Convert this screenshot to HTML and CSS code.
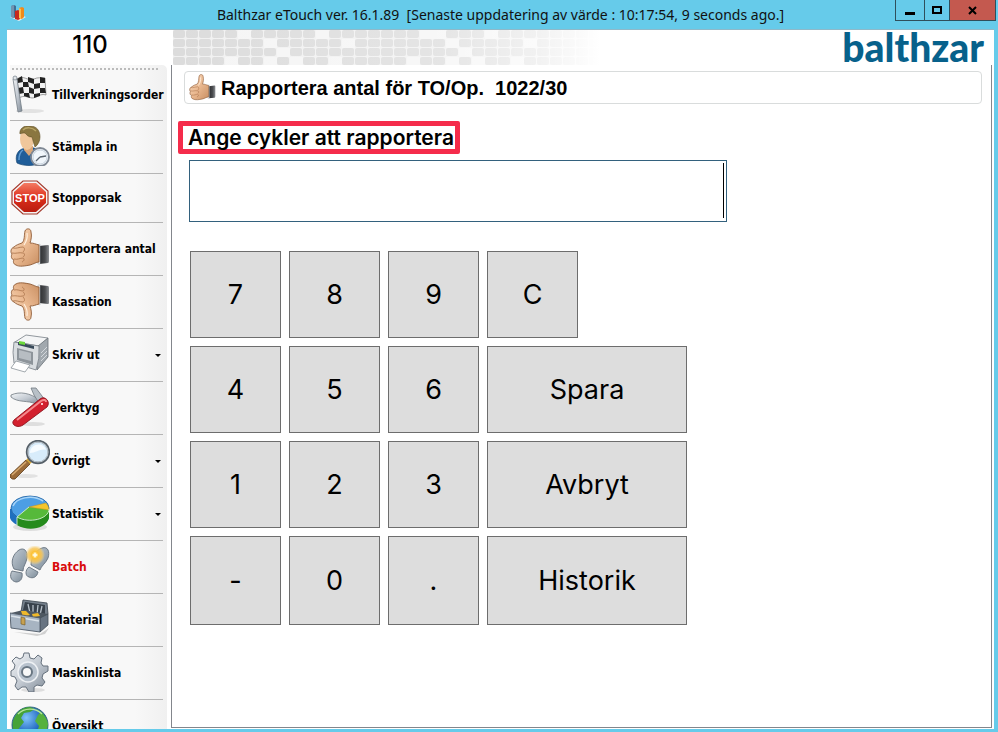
FILE: index.html
```
<!DOCTYPE html>
<html lang="sv">
<head>
    <meta charset="UTF-8" />
    <meta name="viewport" content="width=device-width, initial-scale=1" />
    <title>Balthzar eTouch</title>
    <link rel="stylesheet" href="styles.css">
</head>
<body>
<!-- Delade symboler -->
<svg class="defs" aria-hidden="true">
    <defs>
        <linearGradient id="skin" x1="0" y1="0" x2="1" y2="1">
            <stop offset="0" stop-color="#fbe0c6"/>
            <stop offset="0.5" stop-color="#eab991"/>
            <stop offset="1" stop-color="#c98f62"/>
        </linearGradient>
        <linearGradient id="cuff">
            <stop offset="0" stop-color="#2b2c2e"/>
            <stop offset="0.6" stop-color="#4b4d50"/>
            <stop offset="1" stop-color="#8c8f93"/>
        </linearGradient>
        <linearGradient id="metal" x1="0" y1="0" x2="1" y2="1">
            <stop offset="0" stop-color="#f4f6f8"/>
            <stop offset="0.5" stop-color="#c3cad2"/>
            <stop offset="1" stop-color="#7f8a96"/>
        </linearGradient>
        <linearGradient id="red" x1="0" y1="0" x2="0" y2="1">
            <stop offset="0" stop-color="#f47b63"/>
            <stop offset="0.5" stop-color="#dc2f1c"/>
            <stop offset="1" stop-color="#b91d10"/>
        </linearGradient>
        <linearGradient id="sole" x1="0" y1="0" x2="1" y2="1">
            <stop offset="0" stop-color="#c2cbd3"/>
            <stop offset="1" stop-color="#7e8d9a"/>
        </linearGradient>
        <radialGradient id="glow">
            <stop offset="0" stop-color="#fff6c8"/>
            <stop offset="0.35" stop-color="#fdc236"/>
            <stop offset="0.7" stop-color="#f7c65a" stop-opacity="0.8"/>
            <stop offset="1" stop-color="#f7d98a" stop-opacity="0"/>
        </radialGradient>
        <radialGradient id="sea" cx="0.4" cy="0.3">
            <stop offset="0" stop-color="#7fc4fa"/>
            <stop offset="1" stop-color="#0f56b4"/>
        </radialGradient>
    </defs>
    <symbol id="thumb" viewBox="0 0 40 40">
        <path d="M29 18l9-1q1 0 1 1v15q0 2-1 2l-9 1z" fill="url(#cuff)"/>
        <path d="M28 17l2-1v20l-2 0z" fill="#f1f3f6" stroke="#a7adb5" stroke-width="0.5"/>
        <path d="M12 15c3-3 2-8 3-12 1-3 6-3 6 1 1 4 0 8-1 11 4 0 5 1 9 2v17c-3 0-5 2-9 3-5 1-11 2-14 0-3-1-3-4-2-5-3-1-3-4-2-6-2-2-1-6 2-7 2-2 5-3 8-4z" fill="url(#skin)" stroke="#8e5b37" stroke-width="0.9"/>
        <path d="M2 25c4 1 7-1 11 0 2 0 2 3 0 4m-9 2c4 1 6-1 9-1 2 1 1 3-1 4M3 20c3 1 6-1 10-1 2 1 2 3 0 5" fill="none" stroke="#a9724a" stroke-width="0.8"/>
        <path d="M17 5c1 5-1 9-3 12" fill="none" stroke="#fff0df" stroke-width="1.2"/>
    </symbol>
</svg>

<div class="window">
    <header class="titlebar">
        <svg class="app-icon" viewBox="0 0 18 18" aria-hidden="true">
            <path d="M1 13l9 4 7-4-6-2z" fill="#e9eef0"/>
            <path d="M2 2l3-1 2 1v11l-2 1-3-1z" fill="#3f6d94"/>
            <path d="M2 2l3-1v13l-3-1z" fill="#7194b0"/>
            <path d="M6 7l3-1 2 1v8l-2 1-3-1z" fill="#c8281c"/>
            <path d="M10 4l3-1 2 1v9l-2 2-3-1z" fill="#f08a1b"/>
            <path d="M10 4l2 1v10l-2-1z" fill="#fbc150"/>
        </svg>
        <div class="caption">Balthzar eTouch ver. 16.1.89  [Senaste uppdatering av värde : 10:17:54, 9 seconds ago.]</div>
        <div class="window-buttons">
            <button type="button" class="win-btn minimize" aria-label="Minimera">
                <svg viewBox="0 0 10 10"><path d="M0 7h10v3H0z"/></svg>
            </button>
            <button type="button" class="win-btn maximize" aria-label="Maximera">
                <svg viewBox="0 0 10 10"><path d="M1 2h8v6H1z" fill="none" stroke="#000" stroke-width="2"/></svg>
            </button>
            <button type="button" class="win-btn close" aria-label="Stäng">
                <svg viewBox="0 0 10 10"><path d="M1 2l7 7M8 2l-7 7" stroke="#000" stroke-width="2"/></svg>
            </button>
        </div>
    </header>

    <div class="client">
        <div class="topbar">
            <div class="station">110</div>
            <svg class="pattern" viewBox="0 0 440 35" aria-hidden="true">
                <defs>
                    <pattern id="cells" width="13" height="9" patternUnits="userSpaceOnUse">
                        <rect width="13" height="9" fill="#f1f1f1"/>
                        <rect width="12" height="8" rx="2" fill="#dcdcdc"/>
                    </pattern>
                    <linearGradient id="fade">
                        <stop offset="0" stop-color="#fff" stop-opacity="0"/>
                        <stop offset="0.6" stop-color="#fff" stop-opacity="0.25"/>
                        <stop offset="0.82" stop-color="#fff" stop-opacity="0.6"/>
                        <stop offset="0.97" stop-color="#fff"/>
                    </linearGradient>
                </defs>
                <rect width="440" height="35" fill="url(#cells)"/>
                <path fill="#f5f5f5" d="M65 0h13v9H65zM143 0h13v9h-13zM247 0h26v9h-26zM312 0h13v9h-13zM91 9h13v9H91zM169 9h13v9h-13zM273 9h13v9h-13zM351 9h13v9h-13zM104 18h13v9h-13zM286 18h13v9h-13zM52 27h13v9H52zM91 27h13v9H91zM117 27h13v9h-13zM156 27h13v9h-13zM234 27h13v9h-13zM273 27h13v9h-13zM299 27h13v9h-13zM338 27h13v9h-13z"/>
                <rect width="440" height="35" fill="url(#fade)"/>
            </svg>
            <div class="logo">balthzar</div>
        </div>

        <div class="workspace">
            <nav class="sidebar">
                <button type="button" class="menu-item first">
                    <svg class="icon" viewBox="0 0 40 40" aria-hidden="true">
                        <ellipse cx="20" cy="37" rx="14" ry="2" fill="#e2e2e2"/>
                        <path d="M7 5c6-5 11 3 17 0 4-2 7-1 11-1l1 17c-6-2-9 3-14 3-5-1-8-3-13 0z" fill="#f1f1f1" stroke="#777" stroke-width="0.7"/>
                        <path d="M7 5l5-3 1 6-5 1zM18 3l6 2v5l-6-2zM30 3l5 1v5l-5 0zM13 8l5 0 1 5-6 0zM24 10l6-1v5l-6 1zM8 14l5-1 1 6-5 1zM19 13l5 2v5l-5-1zM30 14l5 0 1 5-6 0zM14 19l5 0 1 5-6-2zM24 20l6-1v3l-6 2z" fill="#222"/>
                        <path d="M3 5q2-3 4 0l5 32-4 1z" fill="url(#metal)" stroke="#737d86" stroke-width="0.8"/>
                        <circle cx="5" cy="4" r="2" fill="#dfe4e8" stroke="#737d86" stroke-width="0.7"/>
                    </svg>
                    <span>Tillverkningsorder</span>
                </button>
                <button type="button" class="menu-item">
                    <svg class="icon" viewBox="0 0 40 40" aria-hidden="true">
                        <path d="M7 37c-2-6 0-12 5-14l8-2c6 1 10 4 11 8v7c-6 5-18 4-24 1z" fill="#1f5d99" stroke="#174672" stroke-width="0.7"/>
                        <path d="M9 34c0-5 1-8 4-10" fill="none" stroke="#5e9bd2" stroke-width="1.5"/>
                        <path d="M14 20h9v5l-4 5-5-6z" fill="#d9a77a"/>
                        <ellipse cx="17" cy="13" rx="7" ry="11" fill="#f0c79b"/>
                        <path d="M10 8C9 3 14-1 20 0c7 0 10 5 10 11 0 4-2 8-5 10-1-3-2-6-3-10-4 0-5-2-7-4-2 0-4 0-5 1z" fill="#8a7640" stroke="#5f5126" stroke-width="0.6"/>
                        <path d="M13 4c3-3 9-3 13 1" fill="none" stroke="#b8a566" stroke-width="1.5"/>
                        <circle cx="30" cy="31" r="9" fill="#f1f6fb" stroke="#7f8894" stroke-width="1.8"/>
                        <circle cx="30" cy="31" r="7" fill="none" stroke="#bdc9d6" stroke-width="0.8"/>
                        <path d="M30 31l6-1M30 31l-4 4" stroke="#59636e" stroke-width="1.3"/>
                    </svg>
                    <span>Stämpla in</span>
                </button>
                <button type="button" class="menu-item short">
                    <svg class="icon" viewBox="0 0 40 40" aria-hidden="true">
                        <path d="M13 4h14l11 10v13L27 37H13L2 27V14z" fill="#f4f4f4" stroke="#a43a2d" stroke-width="1.2"/>
                        <path d="M14 6h12l10 9v11l-10 9H14L4 26V15z" fill="url(#red)"/>
                        <text x="20" y="25" class="stop-text">STOP</text>
                    </svg>
                    <span>Stopporsak</span>
                </button>
                <button type="button" class="menu-item">
                    <svg class="icon" aria-hidden="true"><use href="#thumb"/></svg>
                    <span>Rapportera antal</span>
                </button>
                <button type="button" class="menu-item">
                    <svg class="icon flipped" aria-hidden="true"><use href="#thumb"/></svg>
                    <span>Kassation</span>
                </button>
                <button type="button" class="menu-item has-menu">
                    <svg class="icon" viewBox="0 0 40 40" aria-hidden="true">
                        <path d="M5 8L16 1l22 3-9 8z" fill="#f4f5f6" stroke="#777f86" stroke-width="0.8"/>
                        <path d="M28 12l10-8v19L27 36z" fill="#a1a8ae" stroke="#6b7278" stroke-width="0.8"/>
                        <path d="M31 19l6-6M31 23l6-6M31 27l6-6" stroke="#d4d8dc" stroke-width="1"/>
                        <path d="M4 8q-2 10 0 21l22 7q4-11 3-24z" fill="#d9dde0" stroke="#777f86" stroke-width="0.8"/>
                        <path d="M8 8l16 4 0 3-16-4z" fill="#394a5a"/>
                        <path d="M9 7l6 1v3l-6-1z" fill="#6bd83b"/>
                        <path d="M7 14l16 4v13L7 26z" fill="#8d949a"/>
                        <path d="M9 16l12 3v8L9 24z" fill="#b7bdc2"/>
                        <path d="M6 27l14 4-5 7-14-4z" fill="#fff" stroke="#8c949a" stroke-width="0.8"/>
                    </svg>
                    <span>Skriv ut</span>
                </button>
                <button type="button" class="menu-item">
                    <svg class="icon" viewBox="0 0 40 40" aria-hidden="true">
                        <ellipse cx="23" cy="37" rx="12" ry="2" fill="#dedede"/>
                        <path d="M1 8c9-4 19-2 29 5l-4 4C18 13 8 16 1 10z" fill="url(#metal)" stroke="#717a82" stroke-width="0.8"/>
                        <path d="M21 1l5 0 9 12-6 3-5-8z" fill="#b8c0c7" stroke="#717a82" stroke-width="0.8"/>
                        <path d="M4 33L30 12c5-4 11 3 7 8L13 38c-6 4-13-1-9-5z" fill="#d3202e" stroke="#8d121c" stroke-width="0.9"/>
                        <path d="M7 33l24-19c3-2 5-1 5 1" fill="none" stroke="#f58a8d" stroke-width="2"/>
                        <circle cx="32" cy="17" r="1" fill="#fff"/>
                    </svg>
                    <span>Verktyg</span>
                </button>
                <button type="button" class="menu-item has-menu">
                    <svg class="icon" viewBox="0 0 40 40" aria-hidden="true">
                        <ellipse cx="16" cy="36" rx="12" ry="2" fill="#e2e2e2"/>
                        <path d="M16 20l4 4L5 39q-3 1-5-2v-2z" fill="#9b6b39" stroke="#5d3d1b" stroke-width="0.8"/>
                        <path d="M16 22L2 35" stroke="#d8ab72" stroke-width="1.5"/>
                        <path d="M16 20l3-3 4 4-3 3z" fill="#d3a53d"/>
                        <circle cx="28" cy="12" r="11" fill="#d8ecfb" stroke="#555f68" stroke-width="2.4"/>
                        <circle cx="28" cy="12" r="10" fill="none" stroke="#b9c3cb" stroke-width="1.2"/>
                        <path d="M20 13c0-9 13-12 16-3-5-2-10 3-16 3z" fill="#f6fbff"/>
                    </svg>
                    <span>Övrigt</span>
                </button>
                <button type="button" class="menu-item has-menu">
                    <svg class="icon" viewBox="0 0 40 40" aria-hidden="true">
                        <ellipse cx="20" cy="34" rx="17" ry="4" fill="#dedede"/>
                        <path d="M0 16v9c4 12 35 13 39 0v-9z" fill="#1f6fbe"/>
                        <path d="M7 25v7c11 7 29 4 32-7v-9l-19 0z" fill="#258b1c"/>
                        <ellipse cx="20" cy="15" rx="19" ry="12" fill="#4c9ee4" stroke="#1f609f" stroke-width="0.8"/>
                        <path d="M19 14L7 24c12 7 32 2 32-8z" fill="#56b93a"/>
                        <path d="M19 14l17-4q3 3 3 7z" fill="#f5c52d" stroke="#c4931d" stroke-width="0.5"/>
                        <path d="M3 13C6 5 22 1 33 8" fill="none" stroke="#a8d4f8" stroke-width="1.5"/>
                        <path d="M19 14L7 24v8M7 24c12 7 32 2 32-8" fill="none" stroke="#d4f0c9" stroke-width="0.9"/>
                    </svg>
                    <span>Statistik</span>
                </button>
                <button type="button" class="menu-item batch">
                    <svg class="icon" viewBox="0 0 40 40" aria-hidden="true">
                        <path d="M9 4c5-3 9 1 8 8-1 6-4 8-4 13l-9-2C0 16 3 8 9 4z" fill="url(#sole)" stroke="#65727e" stroke-width="0.9"/>
                        <path d="M2 25l10 2c1 6-2 9-6 9-5-1-7-6-4-11z" fill="url(#sole)" stroke="#65727e" stroke-width="0.9"/>
                        <path d="M32 2c6-2 8 4 6 10-2 5-7 8-8 12l-9-5c0-8 5-15 11-17z" fill="url(#sole)" stroke="#65727e" stroke-width="0.9"/>
                        <path d="M19 21l9 5c-1 5-5 7-9 5-4-1-4-7 0-10z" fill="url(#sole)" stroke="#65727e" stroke-width="0.9"/>
                        <circle cx="25" cy="9" r="10" fill="url(#glow)"/>
                        <path d="M25 6l1 2 2 1-2 1-1 2-1-2-2-1 2-1z" fill="#fffbe6"/>
                    </svg>
                    <span>Batch</span>
                </button>
                <button type="button" class="menu-item">
                    <svg class="icon" viewBox="0 0 40 40" aria-hidden="true">
                        <path d="M4 33l26 2 9-6-4 6-8 2z" fill="#d0d0d0"/>
                        <path d="M13 1l24 3 1 11-3 3-24-5z" fill="#75808c" stroke="#434c56" stroke-width="0.9"/>
                        <path d="M15 3l20 3v9l-22-4z" fill="#39424c"/>
                        <path d="M18 5l2 9M23 6l0 8M28 6l-1 10M32 7l-2 9" stroke="#b7c0c9" stroke-width="1.3"/>
                        <path d="M1 14l12-3 25 4-8 5z" fill="#4e5862"/>
                        <path d="M11 12l5 0 4 4-7 2zM22 15l6-1 2 3-7 1z" fill="#f0b92b"/>
                        <path d="M30 19l8-4v11l-8 7z" fill="#687482" stroke="#434c56" stroke-width="0.8"/>
                        <path d="M0 14l30 5v14L1 29z" fill="#a7b4c2" stroke="#4e5966" stroke-width="0.9"/>
                        <path d="M1 17l28 5" stroke="#dce3ea" stroke-width="1.4"/>
                        <path d="M11 18l4 1v7l-4-1z" fill="#c7a151" stroke="#6e5620" stroke-width="0.6"/>
                    </svg>
                    <span>Material</span>
                </button>
                <button type="button" class="menu-item">
                    <svg class="icon" viewBox="0 0 40 40" aria-hidden="true">
                        <ellipse cx="23" cy="38" rx="12" ry="2" fill="#dedede"/>
                        <path d="M14 1l5 0 1 5 4 1 4-4 4 3-1 5 2 3 5 0 0 5-5 3-1 4 3 4-3 4-5-1-3 2 0 5-5 0-3-5-4 0-4 3-3-4 2-5-2-4-4-1 0-5 3-2 1-4-3-4 4-4 4 2 3-2z" fill="url(#metal)" stroke="#66717d" stroke-width="1"/>
                        <circle cx="18" cy="20" r="10" fill="#b8c2cd" stroke="#eef1f4" stroke-width="1.5"/>
                        <circle cx="17" cy="20" r="5" fill="#f8f8f8" stroke="#697682" stroke-width="2"/>
                    </svg>
                    <span>Maskinlista</span>
                </button>
                <button type="button" class="menu-item">
                    <svg class="icon" viewBox="0 0 40 40" aria-hidden="true">
                        <circle cx="20" cy="20" r="18" fill="url(#sea)" stroke="#2c5f76" stroke-width="0.9"/>
                        <path d="M3 16C6 7 12 2 20 2l5 2-5 3-6 1-3 5 3 4-4 5-3 4 1 6C6 31 1 24 3 16z" fill="#45a337"/>
                        <path d="M26 4c6 2 11 8 12 15-1 8-4 12-8 15l-3-7 2-6-4-5 3-6 2-2z" fill="#55b13d"/>
                        <path d="M8 9c6-6 17-7 24 0" fill="none" stroke="#b9e59e" stroke-width="1.3"/>
                    </svg>
                    <span>Översikt</span>
                </button>
            </nav>

            <main class="panel">
                <div class="panel-header">
                    <svg class="header-icon" aria-hidden="true"><use href="#thumb"/></svg>
                    <h1>Rapportera antal för TO/Op.  1022/30</h1>
                </div>

                <label class="prompt" for="cycles">Ange cykler att rapportera</label>
                <div class="entry">
                    <input type="text" id="cycles" inputmode="decimal" autocomplete="off">
                    <span class="caret"></span>
                </div>

                <div class="keypad">
                    <button type="button" class="key">7</button>
                    <button type="button" class="key">8</button>
                    <button type="button" class="key">9</button>
                    <button type="button" class="key">C</button>
                    <button type="button" class="key row-start">4</button>
                    <button type="button" class="key">5</button>
                    <button type="button" class="key">6</button>
                    <button type="button" class="key wide">Spara</button>
                    <button type="button" class="key">1</button>
                    <button type="button" class="key">2</button>
                    <button type="button" class="key">3</button>
                    <button type="button" class="key wide">Avbryt</button>
                    <button type="button" class="key">-</button>
                    <button type="button" class="key">0</button>
                    <button type="button" class="key">.</button>
                    <button type="button" class="key wide">Historik</button>
                </div>
            </main>
        </div>
    </div>
</div>
</body>
</html>
```
FILE: styles.css
```
* {
    box-sizing: border-box;
}
body {
    margin: 0;
    font-family: "Liberation Sans", Arial, sans-serif;
    color: #000;
}
button {
    font: inherit;
    color: inherit;
    padding: 0;
    border: none;
    background: none;
}
.defs {
    position: absolute;
    width: 0;
    height: 0;
}
.window {
    display: flex;
    flex-direction: column;
    height: 100vh;
    padding: 0 4px 3px 7px;
    background: #66cbea;
    overflow: hidden;
}

/* Namnlist */
.titlebar {
    display: grid;
    grid-template-columns: 1fr auto 1fr;
    flex: none;
    height: 29px;
}
.app-icon {
    width: 18px;
    height: 18px;
    margin: 4px 0 0 2px;
}
.caption {
    font-family: "Noto Sans", sans-serif;
    font-size: 14px;
    line-height: 30px;
    color: #111;
    white-space: pre;
}
.window-buttons {
    display: flex;
    justify-self: end;
    height: 21px;
    margin-right: -2px;
    border: 1px solid #2f4f5b;
    border-top: none;
}
.win-btn {
    display: flex;
    align-items: center;
    justify-content: center;
    width: 28px;
}
.win-btn svg {
    width: 10px;
    height: 10px;
}
.win-btn.maximize {
    width: 26px;
    border-left: 1px solid #2f4f5b;
    border-right: 1px solid #2f4f5b;
}
.win-btn.close {
    width: 45px;
    background: #c4594f;
}

.client {
    display: flex;
    flex-direction: column;
    flex: 1;
    min-height: 0;
    background: #fff;
    border-top: 1px solid #8fb9c9;
}
.topbar {
    display: flex;
    flex: none;
    height: 35px;
    padding-right: 10px;
}
.station {
    width: 166px;
    font-family: Inter, sans-serif;
    font-size: 24px;
    font-weight: 500;
    line-height: 30px;
    text-align: center;
}
.pattern {
    width: 440px;
    height: 35px;
}
.logo {
    margin-left: auto;
    font-family: Lato, sans-serif;
    font-size: 39px;
    font-weight: 900;
    line-height: 34px;
    color: #07618b;
}
.workspace {
    display: flex;
    flex: 1;
    min-height: 0;
}

/* Meny */
.sidebar {
    flex: none;
    width: 157px;
    margin: 0 4px 0 3px;
    padding-right: 4px;
    background: linear-gradient(to right, #f8f8f8 80%, #f0f0f0);
    border-radius: 0 5px 0 0;
    overflow: hidden;
}
.sidebar::before {
    content: "";
    display: block;
    height: 3px;
    margin: 0 5px 0 2px;
    border-bottom: 2px dotted #bbb;
}
.menu-item {
    display: flex;
    align-items: center;
    gap: 2px;
    width: 100%;
    height: 53px;
    border-bottom: 1px solid #b5b5b5;
    font-family: "DejaVu Sans Condensed", "DejaVu Sans", sans-serif;
    font-size: 12px;
    font-weight: 700;
    text-align: left;
    white-space: nowrap;
}
.menu-item.short {
    height: 49px;
}
.menu-item.first {
    height: 51px;
}
.menu-item.batch {
    color: #d90b0b;
}
.menu-item.has-menu::after {
    content: "";
    margin: 0 2px 0 auto;
    border: 3px solid transparent;
    border-top-color: #000;
    border-bottom: none;
}
.icon {
    flex: none;
    width: 40px;
    height: 40px;
    margin-bottom: 2px;
}
.flipped {
    transform: scaleY(-1);
}
.stop-text {
    font-family: "Liberation Sans", sans-serif;
    font-size: 11px;
    font-weight: 700;
    text-anchor: middle;
    fill: #fff;
}

/* Arbetsyta */
.panel {
    flex: 1;
    margin: 0 2px 1px 0;
    padding: 6px 9px 0 12px;
    border: 1px solid #83868c;
    border-top: none;
}
.panel-header {
    display: flex;
    align-items: center;
    gap: 5px;
    height: 33px;
    padding: 0 4px;
    border: 1px solid #d9dcdc;
    border-radius: 4px;
}
.header-icon {
    width: 27px;
    height: 27px;
}
h1 {
    margin: 0;
    font-size: 20px;
    line-height: 26px;
    white-space: pre;
}
.prompt {
    display: block;
    width: fit-content;
    margin: 17px 0 0 -6px;
    padding: 0 1px 0 5px;
    border: 5px solid #f52c4b;
    border-radius: 2px;
    font-family: Inter, sans-serif;
    font-size: 21px;
    font-weight: 600;
    line-height: 23px;
}
.entry {
    position: relative;
    width: 538px;
    max-width: 100%;
    margin: 6px 0 29px 5px;
}
.entry input {
    display: block;
    width: 100%;
    height: 62px;
    padding: 2px 4px;
    border: 1px solid #33617d;
    background: #fff;
    font-size: 40px;
    text-align: right;
    outline: none;
}
.caret {
    position: absolute;
    top: 3px;
    right: 3px;
    bottom: 4px;
    width: 1px;
    background: #000;
}
.keypad {
    display: grid;
    grid-template-columns: repeat(4, 91px) 101px;
    grid-template-rows: repeat(3, 87px) 89px;
    gap: 8px;
    margin-left: 6px;
}
.key {
    border: 1px solid #6d6d6d;
    background: #ddd;
    font-family: Inter, sans-serif;
    font-size: 27px;
}
.key.row-start {
    grid-column-start: 1;
}
.key.wide {
    grid-column: span 2;
}
```
